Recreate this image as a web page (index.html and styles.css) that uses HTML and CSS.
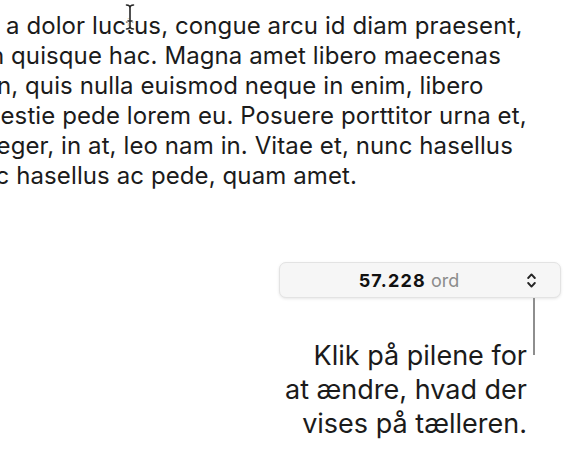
FILE: index.html
```html
<!DOCTYPE html>
<html lang="da">
<head>
<meta charset="utf-8">
<link rel="stylesheet" href="styles.css">
</head>
<body>
<div class="page">
  <div class="doc">
    <div class="line l1">a dolor luctus, congue arcu id diam praesent,</div>
    <div class="line l2">in quisque hac. Magna amet libero maecenas</div>
    <div class="line l3">in, quis nulla euismod neque in enim, libero</div>
    <div class="line l4">molestie pede lorem eu. Posuere porttitor urna et,</div>
    <div class="line l5">Integer, in at, leo nam in. Vitae et, nunc hasellus</div>
    <div class="line l6">ac hasellus ac pede, quam amet.</div>
  </div>

  <div class="counter">
    <div class="counter-label"><b>57.228</b> <span class="unit">ord</span></div>
    <svg class="chev" width="9" height="17" viewBox="0 0 9 17">
      <path d="M1.2 6 L4.5 2.4 L7.8 6" fill="none" stroke="#262626" stroke-width="1.9" stroke-linecap="round" stroke-linejoin="round"/>
      <path d="M1.2 11 L4.5 14.6 L7.8 11" fill="none" stroke="#262626" stroke-width="1.9" stroke-linecap="round" stroke-linejoin="round"/>
    </svg>
  </div>

  <div class="callout">
    <div class="callout-text">Klik på pilene for<br>at ændre, hvad der<br>vises på tælleren.</div>
    <div class="leader"></div>
  </div>

  <svg class="ibeam" width="12" height="28" viewBox="0 0 12 28">
    <g fill="none" stroke-linecap="round">
      <path d="M2.5 2 Q6 2 6 5 Q6 2 9.5 2 M6 5 V23 M2.5 26 Q6 26 6 23 Q6 26 9.5 26 M4 18 H8" stroke="#ffffff" stroke-width="3.4"/>
      <path d="M2.5 2 Q6 2 6 5 Q6 2 9.5 2 M6 5 V23 M2.5 26 Q6 26 6 23 Q6 26 9.5 26 M4 18 H8" stroke="#262626" stroke-width="1.6"/>
    </g>
  </svg>
</div>
</body>
</html>
```

FILE: styles.css
```css
html, body {
  margin: 0;
  padding: 0;
  background: #ffffff;
}

.page {
  position: relative;
  width: 577px;
  height: 451px;
  overflow: hidden;
  font-family: Inter, "Liberation Sans", sans-serif;
  color: #1b1b1b;
}

.doc {
  padding-top: 11px;
  font-size: 24px;
  line-height: 30px;
  letter-spacing: 0.1px;
  white-space: nowrap;
}

.l1 { text-indent: 6px; }
.l2 { text-indent: -16px; }
.l3 { text-indent: -9px; }
.l4 { text-indent: -41px; }
.l5 { text-indent: -32px; }
.l6 { text-indent: -18px; }

.counter {
  margin: 71px 0 0 279px;
  width: 282px;
  height: 36px;
  box-sizing: border-box;
  display: flex;
  align-items: center;
  background: #f6f6f6;
  border: 1px solid #e3e3e3;
  border-radius: 7px;
  box-shadow: 0 1px 3px rgba(0, 0, 0, 0.10);
}

.counter-label {
  flex: 1;
  text-align: center;
  padding-left: 11px;
  font-size: 18px;
  color: #111;
}

.counter-label b {
  font-weight: 700;
  letter-spacing: 1.2px;
}

.unit {
  color: #8c8c8c;
}

.chev {
  margin-right: 24px;
}

.callout {
  display: flex;
  justify-content: flex-end;
  align-items: flex-start;
  padding-right: 42px;
}

.callout-text {
  margin-top: 41px;
  margin-right: 6px;
  text-align: right;
  font-size: 27px;
  line-height: 34px;
  color: #1b1b1b;
}

.leader {
  width: 2px;
  height: 57px;
  background: #8e8e8e;
}

.ibeam {
  position: absolute;
  left: 124px;
  top: 3px;
}
```
